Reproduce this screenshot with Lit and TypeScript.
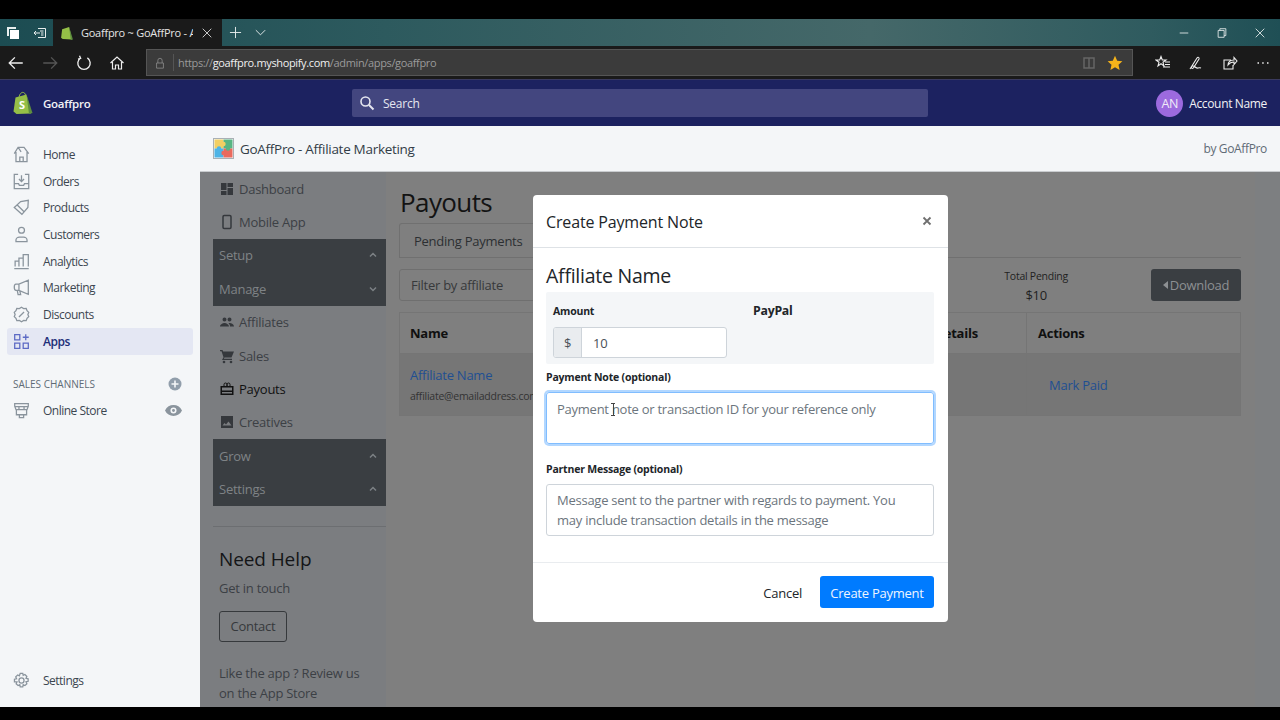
import { LitElement, html, css, svg } from 'lit';
import { customElement } from 'lit/decorators.js';

const ico = (body: unknown, size = 20, vb = '0 0 20 20') => html`<svg width=${size} height=${size} viewBox=${vb} fill="none" stroke="currentColor" stroke-width="1.5">${body}</svg>`;

const shopNav = [
  ['Home', svg`<path d="M1.5 9 6 1.5h7l5.5 7.500M3.5 7v11.500h13V7M8 18.500V13h4v5.500M6 1.500 9.500 7"/>`],
  ['Orders', svg`<path d="M6 1.5H1.500v17h17v-17H14M1.500 12.500h5l1 2h5l1-2h5M10 2.500v7M7 7l3 3 3-3"/>`],
  ['Products', svg`<path d="M1.5 10 9 3l9-1.500-.5 8.500L10.500 18zM14 5.500h.1M5 7l8 8"/>`],
  ['Customers', svg`<circle cx="10" cy="5" r="3.500"/><path d="M3.500 18.500v-2c0-2 2-3.500 4-3.500h5c2 0 4 1.500 4 3.500v2z"/>`],
  ['Analytics', svg`<path d="M1.500 18.500h17M2.500 16V9.500h4.500V16M7 16V6h5v10M12 16V2h6v14"/>`],
  ['Marketing', svg`<path d="M18 1.500V18L7 13.500H3.500C2 13.500 1.500 11.500 1.500 9.500S2 6 3.500 6H7zM7 6v7.500M5 13.500l1 5h3L8 14"/>`],
  ['Discounts', svg`<path d="M10 1.500l2.500 1.500 3-.2 1 2.700 2 2L17.500 10l1 2.500-2 2-1 2.700-3-.2L10 18.500 7.500 17l-3 .2-1-2.700-2-2L2.500 10l-1-2.500 2-2 1-2.700 3 .2zM7 13l6-6M7.500 7.500h.1M12.500 12.500h.1"/>`],
];

const appNavTop = [
  ['Dashboard', svg`<path fill="currentColor" stroke="none" d="M2 2h5.500v7H2zM8.500 2H14v4H8.500zM8.500 7H14v7H8.500zM2 10h5.500v4H2z"/>`],
  ['Mobile App', svg`<rect x="4" y="1.500" width="8" height="13" rx="1.200"/>`],
];

const appNavManage = [
  ['Affiliates', svg`<path fill="currentColor" stroke="none" d="M5.500 7.500a2 2 0 1 0 0-4 2 2 0 0 0 0 4zM10.500 7.500a2 2 0 1 0 0-4 2 2 0 0 0 0 4zM1 12.500c0-2 3-3.500 4.500-3.500S10 10.500 10 12.500zM11 12.500c0-1.500-.5-2.500-1.500-3.300 2-.6 5.500.6 5.500 3.300z"/>`, false],
  ['Sales', svg`<path fill="currentColor" stroke="none" d="M1 2h2.500l.7 1.500H15l-2.500 6H5.500l-.7 1.300H13V12H3l1.500-2.700L2.500 3.200H1z"/><circle cx="5" cy="14" r="1.300" fill="currentColor" stroke="none"/><circle cx="12" cy="14" r="1.300" fill="currentColor" stroke="none"/>`, false],
  ['Payouts', svg`<path fill="currentColor" stroke="none" fill-rule="evenodd" d="M1.500 5h13v9h-13zM3 6.500v3h10v-3zM3 11v1.500h10V11z"/><path d="M5 5V3.500a1.500 1.500 0 0 1 3 0V5M8 5V3.500a1.500 1.500 0 0 1 3 0V5" stroke-width="1"/>`, true],
  ['Creatives', svg`<path fill="currentColor" stroke="none" fill-rule="evenodd" d="M2 2h12v12H2zM3.500 11.500h9L9.500 7.500l-2.500 3-1.500-1.500z"/>`, false],
];

const chevUp = svg`<path d="M2 6.5 5 3.500l3 3"/>`;
const chevDown = svg`<path d="M2 3.5 5 6.500l3-3"/>`;

@customElement('app-root')
export class AppRoot extends LitElement {
  static styles = css`
    :host {
      display: block;
      position: relative;
      width: 1280px;
      height: 720px;
      overflow: hidden;
      background: #000;
      font-family: 'Open Sans', 'Noto Sans', sans-serif;
      letter-spacing: -0.25px;
    }
    .letterbox-top { height: 19px; background: #000; }
    .letterbox-bottom { height: 13px; background: #000; }

    .tabs {
      height: 27px;
      display: flex;
      align-items: stretch;
      background: linear-gradient(90deg, #1c4c52 0%, #2d5a5e 30%, #456869 68%, #2f5b5f 90%, #1f4f55 100%);
      color: #e8eeee;
    }
    .tab-tools { width: 53px; display: flex; align-items: center; gap: 13px; padding-left: 6px; box-sizing: border-box; }
    .tab {
      width: 169px;
      background: #1a1a1a;
      color: #e4e4e4;
      display: flex;
      align-items: center;
      box-sizing: border-box;
      padding: 0 0 0 8px;
      font-size: 11px;
      gap: 8px;
    }
    .tab-title { width: 112px; overflow: hidden; white-space: nowrap; flex: none; }
    .tab-extra { display: flex; align-items: center; gap: 12px; padding-left: 7px; }
    .win-ctrl { margin-left: auto; display: flex; align-items: center; gap: 26px; padding-right: 14px; }

    .addr {
      height: 33px;
      background: #1a1a1a;
      display: flex;
      align-items: center;
      color: #eee;
    }
    .addr-nav { width: 146px; display: flex; align-items: center; gap: 16px; padding-left: 7px; box-sizing: border-box; }
    .addr-box {
      width: 987px;
      height: 27px;
      background: #3b3b3b;
      border: 1px solid #555;
      box-sizing: border-box;
      display: flex;
      align-items: center;
      font-size: 11px;
      letter-spacing: -0.35px;
      color: #9a9a9a;
    }
    .lock { width: 26px; display: flex; justify-content: center; border-right: 1px solid #555; color: #888; height: 17px; align-items: center; }
    .url { padding-left: 4px; white-space: nowrap; }
    .url b { font-weight: 400; color: #f0f0f0; }
    .addr-end { margin-left: auto; display: flex; align-items: center; gap: 11px; padding-right: 9px; }
    .addr-tools { flex: 1; display: flex; align-items: center; justify-content: space-between; padding: 0 9px 0 22px; }
    .dim-dark { color: #555; display: flex; }
    .dim-mid { color: #666; display: flex; }

    .topbar {
      height: 47px;
      background: #1c2260;
      border-top: 1px solid #3a3a5e;
      box-sizing: border-box;
      display: flex;
      align-items: center;
      color: #f2f2f5;
    }
    .brand { width: 352px; display: flex; align-items: center; gap: 10px; padding-left: 13px; box-sizing: border-box; font-size: 11.5px; font-weight: 600; }
    .search {
      width: 576px;
      height: 28px;
      background: #43467f;
      border-radius: 2px;
      display: flex;
      align-items: center;
      gap: 8px;
      padding-left: 7px;
      box-sizing: border-box;
      font-size: 12px;
      color: #e6e7f0;
    }
    .account { margin-left: auto; display: flex; align-items: center; gap: 6px; padding-right: 13px; font-size: 12px; letter-spacing: -0.35px; }
    .avatar {
      width: 27px;
      height: 27px;
      border-radius: 50%;
      background: #9c6ade;
      display: flex;
      align-items: center;
      justify-content: center;
      font-size: 12.5px;
      color: #f0eaf8;
    }

    .page { height: 581px; display: flex; }

    .side {
      width: 200px;
      background: #f4f6f8;
      display: flex;
      flex-direction: column;
      padding: 15px 7px 13px;
      box-sizing: border-box;
      flex: none;
    }
    .side-item {
      height: 26.7px;
      display: flex;
      align-items: center;
      gap: 13px;
      padding-left: 6px;
      font-size: 12px;
      letter-spacing: -0.5px;
      color: #3c4650;
      border-radius: 3px;
      flex: none;
      width: 186px;
      box-sizing: border-box;
    }
    .side-item svg { color: #8a949d; flex: none; width: 17px; height: 17px; }
    .side-item.active { background: #e4e7f3; color: #202e78; font-weight: 600; }
    .side-item.active svg { color: #5c6ac4; }
    .side-head {
      margin-top: 15px;
      height: 28px;
      display: flex;
      align-items: center;
      justify-content: space-between;
      padding: 0 11px 0 6px;
      font-size: 10px;
      color: #5f6b76;
      letter-spacing: 0;
    }
    .side-end { margin-left: auto; margin-right: 11px; color: #919eab; display: flex; }
    .side-spacer { flex: 1; }

    .app { flex: 1; min-width: 0; display: flex; flex-direction: column; }
    .app-head {
      height: 46px;
      background: #f4f6f8;
      border-bottom: 1px solid #c9cccf;
      box-sizing: border-box;
      display: flex;
      align-items: center;
      padding: 0 13px;
      gap: 6px;
      font-size: 13.5px;
      letter-spacing: -0.3px;
      color: #333d47;
    }
    .by { margin-left: auto; font-size: 12px; letter-spacing: -0.35px; color: #5f6b76; }
    .app-body { flex: 1; display: flex; min-height: 0; background: #7f7f7f; }

    .app-nav {
      width: 186px;
      flex: none;
      background: #7b7d80;
      padding-left: 13px;
      box-sizing: border-box;
      display: flex;
      flex-direction: column;
      overflow: hidden;
      font-size: 13px;
      color: #3c4045;
    }
    .nav-item { height: 33.4px; display: flex; align-items: center; gap: 4px; padding-left: 6px; flex: none; }
    .nav-item svg { color: #35383c; flex: none; }
    .nav-item.current { color: #111; }
    .nav-item.current svg { color: #111; }
    .nav-dark { background: #3a3e42; flex: none; }
    .nav-dark .row {
      height: 33.4px;
      display: flex;
      align-items: center;
      justify-content: space-between;
      padding: 0 8px 0 6px;
      color: #7f8386;
    }
    .nav-dark svg { color: #7c8084; }
    .nav-hr { height: 1px; background: #6c6e71; margin-top: 20px; flex: none; }
    .help { padding: 19px 22px 0 6px; }
    .help h3 { margin: 0; font-size: 19px; font-weight: 400; color: #141517; line-height: 26px; letter-spacing: -0.1px; }
    .help p { margin: 6px 0 0; line-height: 20px; color: #3c4045; }
    .contact {
      display: inline-block;
      margin-top: 13px;
      padding: 0 10.5px;
      height: 31px;
      line-height: 29px;
      border: 1px solid #36393c;
      border-radius: 3px;
      box-sizing: border-box;
      color: #36393c;
    }
    .help .review { margin-top: 21px; }

    .content { width: 869px; flex: none; padding: 0 14px 0 13px; box-sizing: border-box; }
    .rail { flex: 1; background: #7d7f81; }
    .content h1 { margin: 13px 0 0 1px; font-size: 26px; font-weight: 400; color: #131313; line-height: 35px; letter-spacing: -0.6px; }
    .tabs-row { height: 35px; border-bottom: 1px solid #707070; box-sizing: border-box; margin-top: 3px; }
    .tab-pill {
      display: inline-flex;
      align-items: center;
      height: 35px;
      padding: 0 14px;
      border: 1px solid #707070;
      border-bottom: none;
      border-radius: 3px 3px 0 0;
      box-sizing: border-box;
      font-size: 13px;
      color: #2c2f32;
    }
    .filters { display: flex; align-items: center; margin-top: 11px; height: 32px; }
    .filter {
      width: 420px;
      height: 32px;
      border: 1px solid #6f6f6f;
      border-radius: 3px;
      box-sizing: border-box;
      padding-left: 11px;
      line-height: 30px;
      font-size: 13px;
      color: #37393b;
    }
    .total { margin-left: auto; margin-right: 83px; margin-top: 4px; text-align: center; color: #1f1f1f; }
    .total small { display: block; font-size: 10.5px; line-height: 14px; }
    .total span { display: block; font-size: 13px; line-height: 20px; margin-top: 2px; }
    .download {
      width: 90px;
      height: 32px;
      background: #3a3e42;
      border-radius: 3px;
      color: #8d9093;
      display: flex;
      align-items: center;
      justify-content: center;
      gap: 2px;
      font-size: 13px;
    }
    .table {
      display: grid;
      grid-template-columns: 465px 162px 214px;
      margin-top: 11px;
      border: 1px solid #757575;
      border-width: 1px 0 0 1px;
      width: 842px;
      box-sizing: border-box;
      font-size: 13px;
    }
    .table > div { border-right: 1px solid #757575; border-bottom: 1px solid #757575; box-sizing: border-box; padding-left: 10px; }
    .table > .mark { padding-left: 22px; }
    .table > .act { padding-left: 11px; }
    .th { height: 41px; line-height: 40px; font-weight: 700; color: #101010; white-space: nowrap; overflow: hidden; }
    .td { height: 62px; background: #767676; display: flex; flex-direction: column; justify-content: center; color: #202020; }
    .td a { color: #1f4f92; }
    .td small { font-size: 10.5px; color: #333; margin-top: 5px; }

    .modal {
      position: absolute;
      left: 533px;
      top: 195px;
      width: 415px;
      height: 427px;
      background: #fff;
      border-radius: 4px;
      box-sizing: border-box;
      display: flex;
      flex-direction: column;
      color: #212529;
    }
    .m-head {
      height: 53px;
      flex: none;
      border-bottom: 1px solid #dee2e6;
      box-sizing: border-box;
      display: flex;
      align-items: center;
      justify-content: space-between;
      padding: 2px 15px 0 13px;
      font-size: 16px;
      letter-spacing: -0.15px;
    }
    .m-close { color: #6f6f6f; display: flex; margin-top: -3px; }
    .m-body { flex: 1; padding: 0 14px 0 13px; display: flex; flex-direction: column; }
    .m-body h2 { margin: 14px 0 0; font-size: 19.5px; font-weight: 400; line-height: 27px; color: #212529; }
    .pay-row {
      display: flex;
      margin-top: 3px;
      height: 72px;
      background: #f4f6f8;
      border-radius: 2px;
      padding: 0 7px;
      box-sizing: border-box;
    }
    .pay-amount { width: 200px; flex: none; }
    .lbl { font-size: 10.5px; font-weight: 700; color: #212529; line-height: 14px; letter-spacing: -0.2px; }
    .pay-amount .lbl { margin-top: 12px; }
    .paypal { font-size: 12.3px; font-weight: 700; padding-top: 10px; color: #212529; }
    .amount-group {
      display: flex;
      margin-top: 9px;
      width: 174px;
      height: 31px;
      border: 1px solid #ced4da;
      border-radius: 3px;
      box-sizing: border-box;
      background: #fff;
      overflow: hidden;
      font-size: 13px;
      line-height: 30px;
      color: #495057;
    }
    .dollar { width: 27px; background: #e9ecef; border-right: 1px solid #ced4da; text-align: center; flex: none; }
    .amount-val { padding-left: 11px; }
    .note-lbl { margin-top: 6px; }
    .field {
      width: 388px;
      border: 1px solid #ced4da;
      border-radius: 3px;
      box-sizing: border-box;
      padding: 5px 10px;
      font-size: 13px;
      line-height: 20px;
      color: #6c757d;
    }
    .field.focus {
      height: 52px;
      margin-top: 8px;
      padding-top: 6px;
      border-color: #80bdff;
      box-shadow: 0 0 0 2px rgba(0, 123, 255, 0.3);
      position: relative;
    }
    .caret { position: absolute; left: 64px; top: 10px; width: 4px; height: 13px; border: solid #444; border-width: 1px 0; box-sizing: border-box; }
    .caret::after { content: ''; position: absolute; left: 1.5px; top: 0; width: 1px; height: 11px; background: #444; }
    .partner-lbl { margin-top: 18px; }
    .field.plain { height: 52px; margin-top: 8px; }
    .m-foot {
      height: 60px;
      flex: none;
      border-top: 1px solid #e9ecef;
      box-sizing: border-box;
      display: flex;
      align-items: center;
      justify-content: flex-end;
      gap: 18px;
      padding: 0 14px 1px 0;
      font-size: 13px;
    }
    .m-foot span { padding-top: 1px; }
    .m-foot .btn {
      width: 114px;
      height: 32px;
      box-sizing: border-box;
      background: #007bff;
      border-radius: 3px;
      color: #eef5ff;
      display: flex;
      align-items: center;
      justify-content: center;
    }
  `;

  render() {
    return html`
      <div class="letterbox-top"></div>
      <div class="tabs">
        <div class="tab-tools">
          ${ico(svg`<path fill="currentColor" stroke="none" d="M1 1h9v2H3v7H1z"/><path fill="#fff" stroke="none" d="M4 4h9v9H4z"/>`, 14, '0 0 14 14')}
          ${ico(svg`<path d="M5 2.5h7.500v9H5M1 7h6M3 5 1 7l2 2M7 5h3.500M8 7h2.500M8 9h2.500" stroke-width="1"/>`, 14, '0 0 14 14')}
        </div>
        <div class="tab">
          <svg width="12" height="14" viewBox="0 0 11 13"><path fill="#95bf47" d="M1 3 7.500 1 10 12.500 1.500 12 0 11z"/><path fill="#5e8e3e" d="M7.500 1 11 12.500l-2 .5z"/></svg>
          <span class="tab-title">Goaffpro ~ GoAffPro - Affiliate</span>
          ${ico(svg`<path d="M2 2l10 10M12 2 2 12" stroke-width="1"/>`, 12, '0 0 14 14')}
        </div>
        <div class="tab-extra">
          ${ico(svg`<path d="M7 1v12M1 7h12" stroke-width="1"/>`, 13, '0 0 14 14')}
          ${ico(svg`<path d="M2 4.5 7 9.500l5-5" stroke-width="1"/>`, 13, '0 0 14 14')}
        </div>
        <div class="win-ctrl">
          ${ico(svg`<path d="M2 7h10" stroke-width="1"/>`, 12, '0 0 14 14')}
          ${ico(svg`<path d="M2.5 4h7v8h-7zM4.500 4V2h7v8H9.500" stroke-width="1"/>`, 12, '0 0 14 14')}
          ${ico(svg`<path d="M2 2l10 10M12 2 2 12" stroke-width="1"/>`, 12, '0 0 14 14')}
        </div>
      </div>
      <div class="addr">
        <div class="addr-nav">
          ${ico(svg`<path d="M14 8H2M7 3 2 8l5 5" stroke-width="1.200"/>`, 18, '0 0 16 16')}
          <span class="dim-dark">${ico(svg`<path d="M2 8h12M9 3l5 5-5 5" stroke-width="1.200"/>`, 18, '0 0 16 16')}</span>
          ${ico(svg`<path d="M5 3.500a5.500 5.500 0 1 0 6 0M4 1.500l1 2.300-2.300.7" stroke-width="1.200"/>`, 18, '0 0 16 16')}
          ${ico(svg`<path d="M1.500 8 8 2l6.500 6M3.500 7v7h3V10h3v4h3V7" stroke-width="1.200"/>`, 16, '0 0 16 16')}
        </div>
        <div class="addr-box">
          <span class="lock">${ico(svg`<path d="M3 7h8v6H3zM4.500 7V4a2.500 2.500 0 0 1 5 0v3" stroke-width="1"/>`, 12, '0 0 14 14')}</span>
          <span class="url">https://<b>goaffpro.myshopify.com</b>/admin/apps/goaffpro</span>
          <span class="addr-end">
            <span class="dim-mid">${ico(svg`<path d="M2 2h10v10H2zM7 2v10" stroke-width="1.500"/>`, 14, '0 0 14 14')}</span>
            <svg width="16" height="16" viewBox="0 0 16 16"><path fill="#f5b31a" d="M8 .8l2.200 4.900 5.200.5-3.900 3.500 1.100 5.200L8 12.200l-4.600 2.700 1.100-5.200L.6 6.200l5.200-.5z"/></svg>
          </span>
        </div>
        <div class="addr-tools">
          ${ico(svg`<path d="M6 1.500 7.300 5H11L8 7.300 9 11 6 8.800 3 11l1-3.700L1 5h3.700zM10 7h5M10 9.500h5M8 12h7" stroke-width="1.100"/>`, 16, '0 0 16 16')}
          ${ico(svg`<path d="M2 14 9 3c1-1.500 2.500-.5 2 1L6 12c-1 2-2.500 2-2.500 0 0-1 2-1.500 3-.5s2 2 3.500 1.500 2-.5 3 0" stroke-width="1.100"/>`, 16, '0 0 16 16')}
          ${ico(svg`<path d="M9 5H2v9h9v-4M6 10c0-3 2-5 6-5V2.500L15 6l-3 3.500V7c-2.500 0-4.500 1-6 3z" stroke-width="1.100"/>`, 16, '0 0 16 16')}
          ${ico(svg`<path d="M2.5 8h1.500M7.200 8h1.500M12 8h1.500" stroke-width="1.500"/>`, 16, '0 0 16 16')}
        </div>
      </div>

      <div class="topbar">
        <div class="brand">
          <svg width="20" height="24" viewBox="0 0 19 24">
            <path fill="#95bf47" d="M2 6.5 13 3.500 17.500 22.500 3 23 0 20.500z"/>
            <path fill="#5e8e3e" d="M13 3.500 19 22l-3.500 1z"/>
            <path fill="none" stroke="#95bf47" d="M5.500 6.500C6 3 8 .8 10 1.500s2 2.500 2 4"/>
            <text x="5.500" y="18" font-size="11" font-weight="700" fill="#fff" font-family="Open Sans">S</text>
          </svg>
          <span>Goaffpro</span>
        </div>
        <div class="search">
          ${ico(svg`<circle cx="6.500" cy="6.500" r="4.500" stroke-width="1.600"/><path d="M10 10l4.500 4.500" stroke-width="2"/>`, 16, '0 0 16 16')}
          <span>Search</span>
        </div>
        <div class="account">
          <span class="avatar">AN</span>
          <span>Account Name</span>
        </div>
      </div>

      <div class="page">
        <nav class="side">
          ${shopNav.map(([label, icon]) => html`<div class="side-item">${ico(icon)}<span>${label}</span></div>`)}
          <div class="side-item active">
            ${ico(svg`<path d="M2 2h6v6H2zM2 12h6v6H2zM12 12h6v6h-6zM15 1.500v7M11.500 5h7"/>`)}
            <span>Apps</span>
          </div>
          <div class="side-head">
            <span>SALES CHANNELS</span>
            <svg width="14" height="14" viewBox="0 0 14 14"><circle cx="7" cy="7" r="6.500" fill="#919eab"/><path d="M7 3.500v7M3.500 7h7" stroke="#f4f6f8" stroke-width="1.600"/></svg>
          </div>
          <div class="side-item">
            ${ico(svg`<path d="M2 2h16v3l-1.500 4h-13L2 5zM2 5.500h16M4 9v6h12V9M7.500 15v3.500h5V15M7 9V5.500M13 9V5.500"/>`)}
            <span>Online Store</span>
            <span class="side-end"><svg width="14" height="14" viewBox="0 0 14 14"><path fill="currentColor" fill-rule="evenodd" d="M0 7c1.500-3 4-4.500 7-4.500S12.500 4 14 7c-1.500 3-4 4.500-7 4.500S1.500 10 0 7zm7 2.500a2.500 2.500 0 1 0 0-5 2.500 2.500 0 0 0 0 5z"/><circle cx="7" cy="7" r="1.200" fill="currentColor"/></svg></span>
          </div>
          <div class="side-spacer"></div>
          <div class="side-item">
            ${ico(svg`<circle cx="10" cy="10" r="3"/><path d="M8.500 1.500h3l.5 2.500 2-1 2.300 2.200-1 2.300 2.500.5v3l-2.500.5 1 2.300-2.300 2.200-2-1-.5 2.500h-3l-.5-2.500-2 1-2.300-2.200 1-2.300L1.700 11.500v-3L4.200 8l-1-2.300L5.500 3.500l2 1z"/>`)}
            <span>Settings</span>
          </div>
        </nav>

        <div class="app">
          <div class="app-head">
            <svg width="21" height="21" viewBox="0 0 21 21">
              <rect x=".5" y=".5" width="20" height="20" fill="#f4f6f8" stroke="#a9b0b5"/>
              <rect x="1.500" y="1.500" width="9" height="9" fill="#f2cf63"/>
              <rect x="10.500" y="1.500" width="9" height="9" fill="#58b583"/>
              <rect x="1.500" y="10.500" width="9" height="9" fill="#4eb4e6"/>
              <rect x="10.500" y="10.500" width="9" height="9" fill="#ea6a5e"/>
              <circle cx="10.500" cy="6" r="2.200" fill="#f2cf63"/>
              <circle cx="15" cy="10.500" r="2.200" fill="#58b583"/>
              <circle cx="6" cy="10.500" r="2.200" fill="#4eb4e6"/>
              <circle cx="10.500" cy="15" r="2.200" fill="#ea6a5e"/>
            </svg>
            <span>GoAffPro - Affiliate Marketing</span>
            <span class="by">by GoAffPro</span>
          </div>
          <div class="app-body">
            <aside class="app-nav">
              ${appNavTop.map(([label, icon]) => html`<div class="nav-item">${ico(icon, 16, '0 0 16 16')}<span>${label}</span></div>`)}
              <div class="nav-dark">
                <div class="row"><span>Setup</span>${ico(chevUp, 10, '0 0 10 10')}</div>
                <div class="row"><span>Manage</span>${ico(chevDown, 10, '0 0 10 10')}</div>
              </div>
              ${appNavManage.map(([label, icon, current]) => html`<div class="nav-item ${current ? 'current' : ''}">${ico(icon, 16, '0 0 16 16')}<span>${label}</span></div>`)}
              <div class="nav-dark">
                <div class="row"><span>Grow</span>${ico(chevUp, 10, '0 0 10 10')}</div>
                <div class="row"><span>Settings</span>${ico(chevUp, 10, '0 0 10 10')}</div>
              </div>
              <div class="nav-hr"></div>
              <div class="help">
                <h3>Need Help</h3>
                <p>Get in touch</p>
                <span class="contact">Contact</span>
                <p class="review">Like the app ? Review us on the App Store</p>
              </div>
            </aside>
            <main class="content">
              <h1>Payouts</h1>
              <div class="tabs-row"><span class="tab-pill">Pending Payments</span></div>
              <div class="filters">
                <div class="filter">Filter by affiliate</div>
                <div class="total"><small>Total Pending</small><span>$10</span></div>
                <div class="download"><svg width="5" height="8" viewBox="0 0 5 8"><path fill="currentColor" d="M5 0v8L0 4z"/></svg>Download</div>
              </div>
              <div class="table">
                <div class="th">Name</div>
                <div class="th">Payment Details</div>
                <div class="th act">Actions</div>
                <div class="td"><a>Affiliate Name</a><small>affiliate@emailaddress.com</small></div>
                <div class="td"></div>
                <div class="td mark"><a>Mark Paid</a></div>
              </div>
            </main>
            <div class="rail"></div>
          </div>
        </div>
      </div>
      <div class="letterbox-bottom"></div>

      <section class="modal">
        <header class="m-head">
          <span>Create Payment Note</span>
          <span class="m-close">${ico(svg`<path d="M2.5 2.500l7 7M9.500 2.500l-7 7" stroke-width="1.800"/>`, 12, '0 0 12 12')}</span>
        </header>
        <div class="m-body">
          <h2>Affiliate Name</h2>
          <div class="pay-row">
            <div class="pay-amount">
              <div class="lbl">Amount</div>
              <div class="amount-group"><span class="dollar">$</span><span class="amount-val">10</span></div>
            </div>
            <div class="paypal">PayPal</div>
          </div>
          <div class="lbl note-lbl">Payment Note (optional)</div>
          <div class="field focus">Payment note or transaction ID for your reference only<span class="caret"></span></div>
          <div class="lbl partner-lbl">Partner Message (optional)</div>
          <div class="field plain">Message sent to the partner with regards to payment. You may include transaction details in the message</div>
        </div>
        <footer class="m-foot">
          <span>Cancel</span>
          <span class="btn">Create Payment</span>
        </footer>
      </section>
    `;
  }
}
